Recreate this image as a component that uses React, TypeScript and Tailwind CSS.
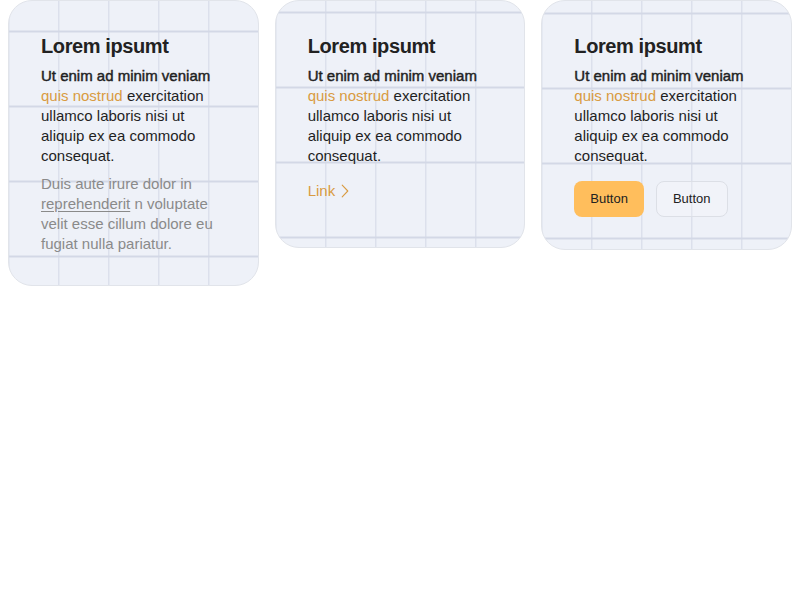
import React from 'react';

const gridBg =
  'bg-[#eef1f8] bg-[linear-gradient(to_right,#d3d8e6_1px,transparent_1px),linear-gradient(to_bottom,#d3d8e6_2px,transparent_2px)] bg-[size:50px_75px] bg-center';

const Card: React.FC<{ className?: string; children: React.ReactNode }> = ({ className = '', children }) => (
  <div className={`rounded-3xl border border-[#e1e4ea] ${gridBg} px-8 pt-[31px] ${className}`}>{children}</div>
);

const Intro: React.FC = () => (
  <>
    <h2 className="text-[20px] leading-7 font-semibold tracking-[-0.4px] text-[#222] mb-1.5">Lorem ipsumt</h2>
    <p className="text-[15px] leading-5 text-[#1f1f1f]">
      <span className="[-webkit-text-stroke:0.45px_#1f1f1f]">Ut enim ad minim veniam</span>{' '}
      <span className="text-[#d99b41]">quis nostrud</span> exercitation ullamco laboris nisi ut aliquip ex ea
      commodo consequat.
    </p>
  </>
);

export default function App() {
  return (
    <div className="min-h-screen bg-white px-2 font-['Liberation_Sans',Arial,sans-serif]">
      <div className="grid grid-cols-3 gap-4 items-start">
        {/* Card with extra copy */}
        <Card className="pb-[31px]">
          <Intro />
          <p className="mt-2 text-[15px] leading-5 text-[#8a8a8a]">
            Duis aute irure dolor in <span className="underline underline-offset-2">reprehenderit</span> n voluptate
            velit esse cillum dolore eu fugiat nulla pariatur.
          </p>
        </Card>

        {/* Card with link */}
        <Card className="pb-[44px]">
          <Intro />
          <a href="#" className="mt-[15px] inline-flex items-center gap-1.5 text-[15px] leading-5 text-[#d99b41]">
            Link
            <svg width="8" height="14" viewBox="0 0 8 14" fill="none" stroke="currentColor" strokeWidth="1.1">
              <polyline points="1.2,1.2 6.8,7 1.2,12.8" strokeLinecap="round" strokeLinejoin="round" />
            </svg>
          </a>
        </Card>

        {/* Card with buttons */}
        <Card className="pb-[32px]">
          <Intro />
          <div className="mt-[15px] flex gap-3">
            <button className="rounded-lg bg-[#ffbe5c] px-4 h-9 text-[13px] text-[#222]">Button</button>
            <button className="rounded-lg border border-[#dcdfe6] bg-white/20 px-4 h-9 text-[13px] text-[#222]">
              Button
            </button>
          </div>
        </Card>
      </div>
    </div>
  );
}
